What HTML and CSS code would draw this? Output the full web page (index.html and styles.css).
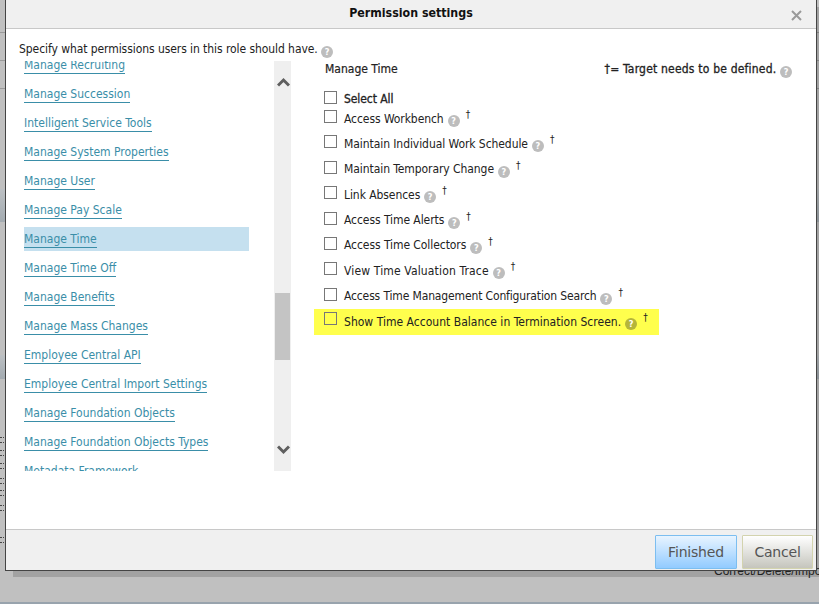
FILE: index.html
```html
<!DOCTYPE html>
<html lang="en">
<head>
<meta charset="utf-8">
<title>Permission settings</title>
<link rel="stylesheet" href="styles.css">
</head>
<body>
<div class="backdrop">
  <div class="bg-lines"><i></i><i></i><i></i></div>
  <div class="bg-bands"><i></i><i></i></div>
  <svg class="dashes" width="5" height="604" viewBox="0 0 5 604"><path d="M0 437.500h4M0 442.500h4M0 450.500h4M0 455.500h4M0 463.500h4M0 468.500h4M0 478.500h4M0 483.500h4M0 490.500h4M0 495.500h4M0 505.500h4M0 510.500h4M0 537.500h4M0 542.500h4" stroke="#444" stroke-dasharray="2 1"/></svg>
</div>
<div class="shadow"></div>
<div class="bg-text">Correct/Delete/Import</div>
<div class="dialog">
  <header class="head">
    <h1>Permission settings</h1>
    <svg class="close" width="11" height="11" viewBox="0 0 11 11"><path d="M1 1l9 9M10 1l-9 9" fill="none" stroke="#999" stroke-width="2"/></svg>
  </header>
  <div class="body">
    <p class="intro">Specify what permissions users in this role should have. <span class="q">?</span></p>
    <div class="cols">
      <div class="left">
        <nav class="list">
          <ul class="items">
            <li><a>Manage Recruiting</a></li>
            <li><a>Manage Succession</a></li>
            <li><a>Intelligent Service Tools</a></li>
            <li><a>Manage System Properties</a></li>
            <li><a>Manage User</a></li>
            <li><a>Manage Pay Scale</a></li>
            <li class="on"><a>Manage Time</a></li>
            <li><a>Manage Time Off</a></li>
            <li><a>Manage Benefits</a></li>
            <li><a>Manage Mass Changes</a></li>
            <li><a>Employee Central API</a></li>
            <li><a>Employee Central Import Settings</a></li>
            <li><a>Manage Foundation Objects</a></li>
            <li><a>Manage Foundation Objects Types</a></li>
            <li><a>Metadata Framework</a></li>
          </ul>
        </nav>
        <div class="bar">
          <svg class="arrow up" width="13" height="10" viewBox="0 0 13 10"><path d="M1 8.500 6.500 3 12 8.500" fill="none" stroke="#5f5f5f" stroke-width="3"/></svg>
          <div class="thumb"></div>
          <svg class="arrow down" width="13" height="10" viewBox="0 0 13 10"><path d="M1 1.500 6.500 7 12 1.500" fill="none" stroke="#5f5f5f" stroke-width="3"/></svg>
        </div>
      </div>
      <div class="right">
        <div class="rhead"><span>Manage Time</span><span class="note">†= Target needs to be defined. <span class="q">?</span></span></div>
        <div class="row all"><span class="box"></span><span class="strong">Select All</span></div>
        <div class="row"><span class="box"></span><span>Access Workbench</span><span class="q">?</span><sup>†</sup></div>
        <div class="row"><span class="box"></span><span>Maintain Individual Work Schedule</span><span class="q">?</span><sup>†</sup></div>
        <div class="row"><span class="box"></span><span>Maintain Temporary Change</span><span class="q">?</span><sup>†</sup></div>
        <div class="row"><span class="box"></span><span>Link Absences</span><span class="q">?</span><sup>†</sup></div>
        <div class="row"><span class="box"></span><span>Access Time Alerts</span><span class="q">?</span><sup>†</sup></div>
        <div class="row"><span class="box"></span><span>Access Time Collectors</span><span class="q">?</span><sup>†</sup></div>
        <div class="row wide"><span class="box"></span><span>View Time Valuation Trace</span><span class="q">?</span><sup>†</sup></div>
        <div class="row tight"><span class="box"></span><span>Access Time Management Configuration Search</span><span class="q">?</span><sup>†</sup></div>
        <div class="row mark"><span class="box"></span><span>Show Time Account Balance in Termination Screen.</span><span class="q">?</span><sup>†</sup></div>
      </div>
    </div>
  </div>
  <footer class="foot"><button class="btn primary">Finished</button><button class="btn">Cancel</button></footer>
</div>
</body>
</html>
```
FILE: styles.css
```css
html, body { margin: 0; height: 100%; overflow: hidden; }
body { width: 819px; height: 604px; background: #c0c0c0; font-family: "DejaVu Sans Condensed", "DejaVu Sans", sans-serif; font-size: 12px; color: #222; position: relative; }
.backdrop { position: absolute; inset: 0; border-bottom: 2px solid #98a3ad; box-sizing: border-box; }
.bg-lines i { position: absolute; left: 0; width: 819px; height: 1px; background: #9a9a9a; }
.bg-lines i:nth-child(1) { top: 32px; }
.bg-lines i:nth-child(2) { top: 60px; }
.bg-lines i:nth-child(3) { top: 88px; }
.bg-bands i { position: absolute; left: 0; width: 819px; background: linear-gradient(#bcc0c3, #a3abb1); }
.bg-bands i:nth-child(1) { top: 189px; height: 33px; }
.bg-bands i:nth-child(2) { top: 355px; height: 24px; }
.dashes { position: absolute; left: 0; top: 0; }
.shadow { position: absolute; left: 13px; top: 7px; width: 806px; height: 570px; background: rgba(0, 0, 0, .157); }
.bg-text { position: absolute; left: 714px; top: 564px; font: 12px/14px "Liberation Sans", sans-serif; color: #222; white-space: nowrap; }
.dialog { position: absolute; left: 5px; top: -1px; width: 812px; height: 572px; box-sizing: border-box; border: 1px solid #444; background: #fff; display: flex; flex-direction: column; }
.head { height: 29px; box-sizing: border-box; flex: none; background: #f0f0f0; border-bottom: 1px solid #c8c8c8; display: flex; align-items: center; justify-content: center; position: relative; padding-bottom: 2px; }
.head h1 { margin: 0; font-size: 12.300px; font-weight: bold; color: #111; }
.close { position: absolute; right: 14px; top: 10px; }
.body { flex: 1; min-height: 0; padding: 12px 0 0 13px; }
.intro { margin: 0 0 3px; height: 17px; line-height: 17px; letter-spacing: -.07px; }
.q { display: inline-block; width: 12px; height: 12px; border-radius: 50%; background: #bdbdbd; color: #fff; font-size: 9px; font-weight: bold; line-height: 12px; text-align: center; vertical-align: -2px; letter-spacing: 0; }
.cols { display: flex; }
.left { display: flex; width: 272px; flex: none; }
.list { width: 255px; height: 410px; overflow: hidden; }
.items { list-style: none; margin: -8px 0 0; padding: 0; }
.items li { height: 24px; margin: 0 0 5px 5px; width: 225px; line-height: 24px; white-space: nowrap; }
.items li.on { background: #c5e0ef; }
.items a { color: #3a8ea8; border-bottom: 1px solid #3a8ea8; padding-bottom: 1px; }
.bar { width: 17px; height: 410px; background: #efefef; position: relative; flex: none; }
.thumb { position: absolute; left: 1px; top: 232px; width: 15px; height: 67px; background: #c4c4c4; }
.arrow { position: absolute; left: 3px; }
.arrow.up { top: 16px; }
.arrow.down { top: 384px; }
.right { flex: 1; padding-left: 33px; }
.rhead { display: flex; justify-content: space-between; width: 468px; height: 17px; line-height: 17px; margin-bottom: 12px; padding-left: 1px; box-sizing: border-box; -webkit-text-stroke: .2px #222; }
.rhead .note { letter-spacing: .2px; -webkit-text-stroke: .3px #222; }
.rhead .q { -webkit-text-stroke: 0; }
.row { display: flex; align-items: flex-start; height: 25.400px; line-height: 17px; white-space: nowrap; letter-spacing: -.07px; }
.row.wide { letter-spacing: .15px; }
.row.tight { letter-spacing: -.14px; }
.box { width: 13px; height: 13px; box-sizing: border-box; border: 1px solid #777; background: #fff; margin-right: 7px; flex: none; }
.row > span:nth-child(2) { margin-top: .5px; }
.row .q { margin: 5px 0 0 4px; }
.row sup { font-size: 10px; line-height: 10px; margin: 0 0 0 6px; }
.row.all { height: 20px; }
.row.all .box { margin-top: 1px; }
.strong { -webkit-text-stroke: .3px #222; }
.row.mark { background: #ffff4d; width: 345px; margin: -4px 0 0 -10px; padding: 4px 0 0 10px; height: 26px; box-sizing: border-box; letter-spacing: .02px; }
.mark .box { margin-top: -1px; background: transparent; }
.mark .q { background: #b5b53a; }
.foot { height: 41px; box-sizing: border-box; flex: none; background: #f0f0f0; border-top: 1px solid #c8c8c8; display: flex; justify-content: flex-end; align-items: flex-start; gap: 5px; padding: 5px 3px 0 0; }
.btn { height: 34px; width: 71px; border: 1px solid #d3d3ae; border-radius: 1px; background: linear-gradient(#fff, #c5c5bd); color: #555; font: 14px "DejaVu Sans", sans-serif; letter-spacing: -.2px; padding: 0; }
.btn.primary { width: 82px; border-color: #7cbef0; background: linear-gradient(#e8f4ff, #92cbff); }
```
